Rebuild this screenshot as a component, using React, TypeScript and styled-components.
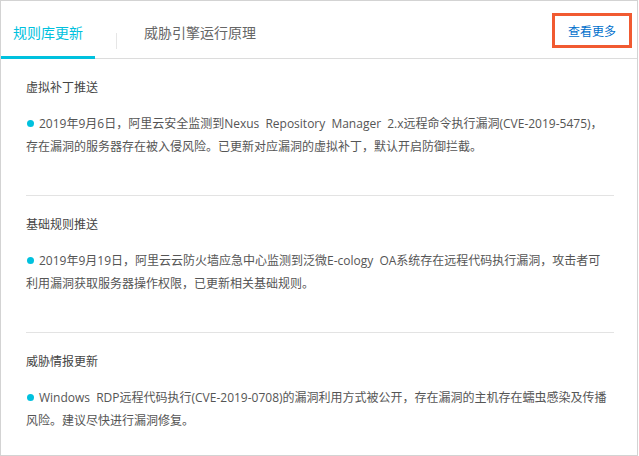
import styled, { createGlobalStyle } from "styled-components";

const GlobalStyle = createGlobalStyle`
  html, body {
    margin: 0;
    padding: 0;
    background: #ffffff;
  }
  body {
    font-family: "Noto Sans CJK SC", "Liberation Sans", sans-serif;
  }
`;

const Panel = styled.div`
  width: 638px;
  height: 456px;
  box-sizing: border-box;
  border: 1px solid #d3d3d3;
  background: #fff;
  overflow: hidden;
`;

const Header = styled.div`
  display: flex;
  align-items: flex-start;
  height: 57px;
  border-bottom: 1px solid #dcdcdc;
`;

const Tab = styled.div<{ $active?: boolean }>`
  box-sizing: border-box;
  height: 58px;
  margin-bottom: -1px;
  padding: 21px 12px 0;
  font-size: 14px;
  line-height: 20px;
  color: ${(p) => (p.$active ? "#00c1de" : "#666")};
  border-bottom: 3px solid ${(p) => (p.$active ? "#00c1de" : "transparent")};
  white-space: nowrap;
  cursor: pointer;
`;

const Divider = styled.div`
  width: 1px;
  height: 16px;
  margin: 32px 15px 0 21px;
  background: #e6e6e6;
`;

const MoreLink = styled.a`
  margin: 12px 5px 0 auto;
  padding: 0 13px;
  height: 29px;
  line-height: 29px;
  border: 3px solid #f15a31;
  font-size: 12px;
  color: #0070cc;
  text-decoration: none;
  cursor: pointer;
`;

const Section = styled.div`
  margin: 0 23px 0 25px;
  padding: 18px 0 37px;
  & + & {
    border-top: 1px solid #e3e3e3;
  }
`;

const SectionTitle = styled.div`
  font-size: 12px;
  line-height: 20px;
  color: #444;
`;

const Paragraph = styled.p`
  margin: 15px 3px 0 0;
  font-family: "Open Sans", "Noto Sans CJK SC", sans-serif;
  font-size: 12px;
  line-height: 23px;
  word-spacing: 3px;
  color: #555;
`;

const Dot = styled.span`
  display: inline-block;
  width: 7px;
  height: 7px;
  margin: 0 5px 2px 1px;
  border-radius: 50%;
  background: #00c1de;
  vertical-align: middle;
`;

const news = [
  {
    title: "虚拟补丁推送",
    text: "2019年9月6日，阿里云安全监测到Nexus Repository Manager 2.x远程命令执行漏洞(CVE-2019-5475)，存在漏洞的服务器存在被入侵风险。已更新对应漏洞的虚拟补丁，默认开启防御拦截。",
  },
  {
    title: "基础规则推送",
    text: "2019年9月19日，阿里云云防火墙应急中心监测到泛微E-cology OA系统存在远程代码执行漏洞，攻击者可利用漏洞获取服务器操作权限，已更新相关基础规则。",
  },
  {
    title: "威胁情报更新",
    text: "Windows RDP远程代码执行(CVE-2019-0708)的漏洞利用方式被公开，存在漏洞的主机存在蠕虫感染及传播风险。建议尽快进行漏洞修复。",
  },
];

export default function App() {
  return (
    <>
      <GlobalStyle />
      <Panel>
        <Header>
          <Tab $active>规则库更新</Tab>
          <Divider />
          <Tab>威胁引擎运行原理</Tab>
          <MoreLink>查看更多</MoreLink>
        </Header>
        {news.map((item) => (
          <Section key={item.title}>
            <SectionTitle>{item.title}</SectionTitle>
            <Paragraph>
              <Dot />
              {item.text}
            </Paragraph>
          </Section>
        ))}
      </Panel>
    </>
  );
}
